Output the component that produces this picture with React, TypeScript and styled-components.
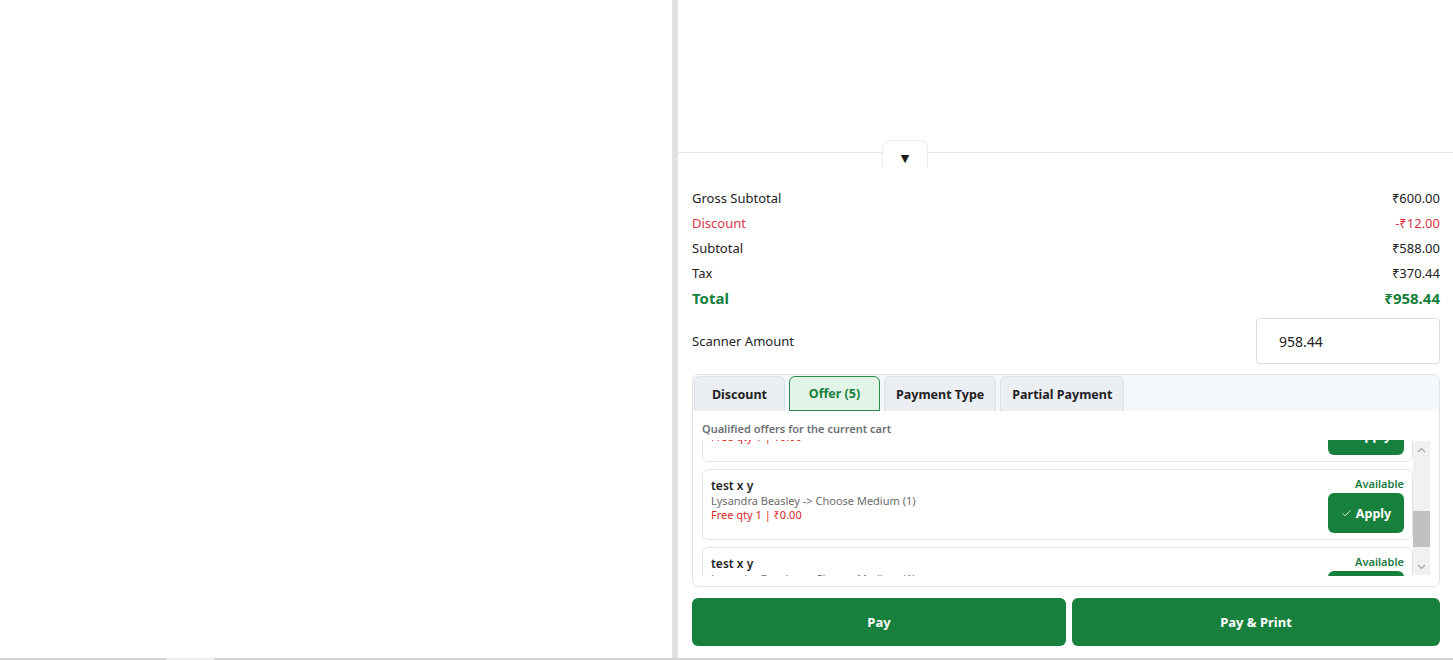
import React, { useLayoutEffect, useRef } from "react";
import styled, { createGlobalStyle } from "styled-components";
import { Check } from "lucide-react";

const GREEN = "#17803d";
const RED = "#dc3545";

const GlobalStyle = createGlobalStyle`
  html, body {
    margin: 0;
    padding: 0;
    background: #fff;
  }
  body {
    font-family: "Noto Sans", "Open Sans", sans-serif;
    color: #222;
    overflow: hidden;
  }
  #root {
    height: 660px;
  }
  * {
    box-sizing: border-box;
  }
`;

const Screen = styled.div`
  height: 660px;
  display: flex;
  flex-direction: column;
`;

const Workspace = styled.div`
  flex: 1;
  display: grid;
  grid-template-columns: 672px 6px 1fr;
  min-height: 0;
`;

const LeftPane = styled.div`
  background: #fff;
`;

const Divider = styled.div`
  background: #e1e1e1;
`;

const BottomTrack = styled.div`
  height: 2px;
  background: linear-gradient(
    to right,
    #d4d4d4 166px,
    #ededed 166px,
    #ededed 214px,
    #d4d4d4 214px
  );
`;

const CheckoutPane = styled.div`
  display: flex;
  flex-direction: column;
  min-width: 0;
`;

const CartArea = styled.div`
  position: relative;
  height: 153px;
  flex: none;
  border-bottom: 1px solid #e6e6e6;
`;

const CollapseToggle = styled.button`
  position: absolute;
  left: 204px;
  top: 140px;
  width: 46px;
  height: 27px;
  padding: 0 0 1px;
  border: 1px solid #ececec;
  border-bottom: none;
  border-radius: 8px 8px 0 0;
  background: #fff;
  display: flex;
  align-items: flex-end;
  justify-content: center;
  font-family: "DejaVu Sans", sans-serif;
  font-size: 11px;
  line-height: 14px;
  color: #1c1c1c;
  cursor: pointer;
`;

const Summary = styled.div`
  padding: 32px 13px 0 14px;
  display: flex;
  flex-direction: column;
`;

const SummaryRow = styled.div<{ $tone?: "red" | "total" }>`
  display: flex;
  justify-content: space-between;
  align-items: center;
  height: 25px;
  font-size: ${({ $tone }) => ($tone === "total" ? "15px" : "13px")};
  font-weight: ${({ $tone }) => ($tone === "total" ? 700 : 400)};
  color: ${({ $tone }) =>
    $tone === "red" ? RED : $tone === "total" ? GREEN : "#222"};
`;

const ScannerRow = styled.div`
  margin-top: 8px;
  display: flex;
  align-items: center;
  justify-content: space-between;
  font-size: 13px;
`;

const AmountInput = styled.input`
  width: 184px;
  height: 46px;
  border: 1px solid #dcdcdc;
  border-radius: 4px;
  padding: 0 0 0 22px;
  font-family: inherit;
  font-size: 14px;
  color: #222;
  outline: none;
`;

const TabsBox = styled.div`
  margin-top: 10px;
  height: 213px;
  border: 1px solid #dfe2e6;
  border-radius: 7px;
  overflow: hidden;
  display: flex;
  flex-direction: column;
`;

const TabStrip = styled.div`
  display: flex;
  gap: 4px;
  padding: 1px 0 0 1px;
  background: #f4f7fb;
  height: 36px;
  flex: none;
`;

const Tab = styled.button<{ $active?: boolean }>`
  height: 35px;
  min-width: 91px;
  padding: 0 11px;
  border: 1px solid ${({ $active }) => ($active ? "#2a8a4f" : "#dde1e6")};
  border-bottom: ${({ $active }) => ($active ? "1px solid #2a8a4f" : "none")};
  border-radius: 6px 6px 0 0;
  background: ${({ $active }) => ($active ? "#e3f5e8" : "#ebeef2")};
  color: ${({ $active }) => ($active ? GREEN : "#222")};
  font-family: inherit;
  font-size: 12.5px;
  font-weight: 700;
  text-align: center;
  cursor: pointer;
`;

const TabBody = styled.div`
  flex: 1;
  min-height: 0;
  padding: 10px 9px 10px 9px;
  display: flex;
  flex-direction: column;
`;

const Caption = styled.div`
  font-size: 11px;
  font-weight: 600;
  line-height: 15px;
  color: #6b6f76;
  margin-bottom: 4px;
`;

const ListFrame = styled.div`
  flex: 1;
  min-height: 0;
  display: flex;
`;

const OfferList = styled.div`
  flex: 1;
  min-width: 0;
  overflow: hidden;
  display: flex;
  flex-direction: column;
  gap: 7px;
`;

const ScrollRail = styled.div`
  flex: none;
  width: 17px;
  margin: 1px 0 1px;
  background: #f1f1f1;
  display: flex;
  flex-direction: column;
`;

const RailButton = styled.div`
  height: 17px;
  flex: none;
  display: flex;
  align-items: center;
  justify-content: center;
`;

const RailTrack = styled.div`
  flex: 1;
  position: relative;
`;

const RailThumb = styled.div<{ $top: number; $size: number }>`
  position: absolute;
  left: 0;
  right: 0;
  top: ${({ $top }) => $top}px;
  height: ${({ $size }) => $size}px;
  background: #c1c1c1;
`;

const OfferCard = styled.div`
  flex: none;
  height: 71px;
  border: 1px solid #e2e4e7;
  border-radius: 6px;
  padding: 7px 8px 6px 8px;
  display: flex;
  justify-content: space-between;
`;

const OfferInfo = styled.div`
  display: flex;
  flex-direction: column;
  padding-top: 1px;
`;

const OfferTitle = styled.div`
  font-size: 12px;
  font-weight: 600;
  line-height: 16px;
  color: #1f1f1f;
`;

const OfferLine = styled.div<{ $red?: boolean }>`
  font-size: 11px;
  line-height: 14px;
  color: ${({ $red }) => ($red ? "#dc2626" : "#6b6b6b")};
`;

const OfferSide = styled.div`
  display: flex;
  flex-direction: column;
  align-items: flex-end;
`;

const Status = styled.div`
  font-size: 11px;
  font-weight: 600;
  line-height: 14px;
  color: #1d7a43;
  margin-bottom: 2px;
`;

const ApplyButton = styled.button`
  width: 76px;
  height: 40px;
  border: none;
  border-radius: 6px;
  background: ${GREEN};
  color: #fff;
  font-family: inherit;
  font-size: 12.5px;
  font-weight: 700;
  display: flex;
  align-items: center;
  justify-content: center;
  gap: 4px;
  cursor: pointer;
`;

const ActionBar = styled.div`
  margin-top: 11px;
  display: grid;
  grid-template-columns: 374fr 368fr;
  gap: 6px;
`;

const PayButton = styled.button`
  height: 48px;
  border: none;
  border-radius: 6px;
  background: ${GREEN};
  color: #fff;
  font-family: inherit;
  font-size: 13px;
  font-weight: 700;
  cursor: pointer;
`;

const totals = [
  { label: "Gross Subtotal", value: "₹600.00" },
  { label: "Discount", value: "-₹12.00", tone: "red" as const },
  { label: "Subtotal", value: "₹588.00" },
  { label: "Tax", value: "₹370.44" },
  { label: "Total", value: "₹958.44", tone: "total" as const },
];

const tabs = ["Discount", "Offer (5)", "Payment Type", "Partial Payment"];

const offers = Array.from({ length: 5 }, (_, i) => ({
  id: i,
  name: "test x y",
  rule: "Lysandra Beasley -> Choose Medium (1)",
  reward: "Free qty 1 | ₹0.00",
}));

function Chevron({ up }: { up?: boolean }) {
  return (
    <svg width="9" height="6" viewBox="0 0 9 6">
      <path
        d={up ? "M1 5 L4.5 1.5 L8 5" : "M1 1 L4.5 4.5 L8 1"}
        fill="none"
        stroke="#a3a3a3"
        strokeWidth="1.1"
      />
    </svg>
  );
}

function OfferRow({ offer }: { offer: (typeof offers)[number] }) {
  return (
    <OfferCard>
      <OfferInfo>
        <OfferTitle>{offer.name}</OfferTitle>
        <OfferLine>{offer.rule}</OfferLine>
        <OfferLine $red>{offer.reward}</OfferLine>
      </OfferInfo>
      <OfferSide>
        <Status>Available</Status>
        <ApplyButton>
          <Check size={11} strokeWidth={1.8} />
          Apply
        </ApplyButton>
      </OfferSide>
    </OfferCard>
  );
}

export default function App() {
  const listRef = useRef<HTMLDivElement>(null);

  useLayoutEffect(() => {
    if (listRef.current) listRef.current.scrollTop = 205;
  }, []);

  return (
    <>
      <GlobalStyle />
      <Screen>
        <Workspace>
          <LeftPane />
          <Divider />
          <CheckoutPane>
            <CartArea>
              <CollapseToggle>▼</CollapseToggle>
            </CartArea>
            <Summary>
              {totals.map((row) => (
                <SummaryRow key={row.label} $tone={row.tone}>
                  <span>{row.label}</span>
                  <span>{row.value}</span>
                </SummaryRow>
              ))}
              <ScannerRow>
                <span>Scanner Amount</span>
                <AmountInput value="958.44" readOnly />
              </ScannerRow>
              <TabsBox>
                <TabStrip>
                  {tabs.map((t) => (
                    <Tab key={t} $active={t === "Offer (5)"}>
                      {t}
                    </Tab>
                  ))}
                </TabStrip>
                <TabBody>
                  <Caption>Qualified offers for the current cart</Caption>
                  <ListFrame>
                    <OfferList ref={listRef}>
                      {offers.map((o) => (
                        <OfferRow key={o.id} offer={o} />
                      ))}
                    </OfferList>
                    <ScrollRail>
                      <RailButton>
                        <Chevron up />
                      </RailButton>
                      <RailTrack>
                        <RailThumb $top={53} $size={36} />
                      </RailTrack>
                      <RailButton>
                        <Chevron />
                      </RailButton>
                    </ScrollRail>
                  </ListFrame>
                </TabBody>
              </TabsBox>
              <ActionBar>
                <PayButton>Pay</PayButton>
                <PayButton>Pay &amp; Print</PayButton>
              </ActionBar>
            </Summary>
          </CheckoutPane>
        </Workspace>
        <BottomTrack />
      </Screen>
    </>
  );
}
